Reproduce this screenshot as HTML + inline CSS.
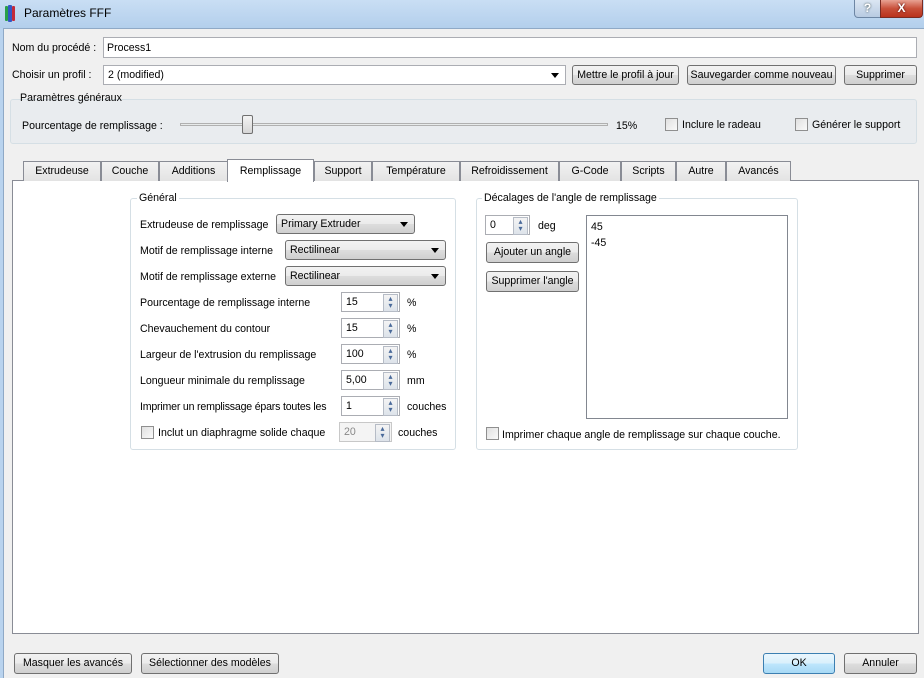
<!DOCTYPE html>
<html><head><meta charset="utf-8"><style>
*{box-sizing:border-box;margin:0;padding:0}
body{width:924px;height:678px;overflow:hidden;background:#b9d3ee;font-family:"Liberation Sans",sans-serif;font-size:10.6px;color:#000;position:relative}
.a{position:absolute;white-space:nowrap}
.title{left:0;top:0;width:924px;height:28px;background:linear-gradient(#c9def4,#b3cfec)}
.body{left:3px;top:28px;width:921px;height:650px;background:#f0f0f0;border-left:1px solid #8fa9c6;border-top:1px solid #8fa9c6}
.inp{background:#fff;border:1px solid #abadb3}
.btn{border:1px solid #707070;border-radius:3px;background:linear-gradient(#f2f2f2 0,#ebebeb 50%,#dddddd 51%,#cfcfcf 100%);text-align:center;line-height:18px}
.combo{border:1px solid #707070;border-radius:3px;background:linear-gradient(#f2f2f2 0,#ebebeb 50%,#dddddd 51%,#cfcfcf 100%);padding-left:4px;line-height:18px}
.combo:after{content:"";position:absolute;right:6px;top:7px;border-left:4px solid transparent;border-right:4px solid transparent;border-top:5px solid #000}
.group{border:1px solid #d5dfe5;border-radius:3px}
.gl{background:#f0f0f0;padding:0 2px}
.tab{top:161px;height:20px;border:1px solid #898c95;border-bottom:none;background:linear-gradient(#f2f2f2,#e3e3e3);text-align:center;line-height:19px}
.spin{background:#fff;border:1px solid #abadb3;padding-left:4px;line-height:18px}
.spin:after{content:"▴\A▾";white-space:pre;font-size:8px;line-height:7px;color:#4a6a9a;text-align:center;position:absolute;right:1px;top:1px;width:13px;height:16px;background:linear-gradient(#f4f4f4,#dde3ea);border:1px solid #b6bcc6}
.cb{width:13px;height:13px;border:1px solid #8f8f8f;background:linear-gradient(135deg,#e0e0e0,#fafafa)}
</style></head><body>
<div class="a title"></div>
<div class="a" style="left:5px;top:6px;width:3px;height:15px;background:#2aa04a;border-radius:1px"></div>
<div class="a" style="left:8px;top:5px;width:4px;height:17px;background:#3358c4;border-radius:1px"></div>
<div class="a" style="left:12px;top:6px;width:3px;height:15px;background:#c42a3a;border-radius:1px"></div>
<div class="a" style="left:24px;top:6px;font-size:12px">Paramètres FFF</div>
<div class="a" style="left:854px;top:0;width:27px;height:18px;border:1px solid #6d86a4;border-top:none;border-radius:0 0 0 4px;background:linear-gradient(#dbe6f3,#b8cbe2);text-align:center;color:#fff;font-weight:bold;font-size:12px;line-height:16px;text-shadow:0 0 2px #344">?</div>
<div class="a" style="left:880px;top:0;width:43px;height:18px;border:1px solid #7a2b22;border-top:none;border-radius:0 0 4px 0;background:linear-gradient(#e8a293,#c8503a 50%,#b9321c);text-align:center;color:#fff;font-weight:bold;font-size:12px;line-height:16px;text-shadow:0 0 2px #400">X</div>
<div class="a body"></div>

<div class="a" style="left:12px;top:42px">Nom du procédé :</div>
<div class="a inp" style="left:103px;top:37px;width:814px;height:21px;padding:4px 0 0 3px">Process1</div>
<div class="a" style="left:12px;top:69px">Choisir un profil :</div>
<div class="a combo" style="left:103px;top:65px;width:463px;height:20px;background:#fff;border-color:#abadb3;border-radius:0">2 (modified)</div>
<div class="a btn" style="left:572px;top:65px;width:107px;height:20px">Mettre le profil à jour</div>
<div class="a btn" style="left:687px;top:65px;width:149px;height:20px">Sauvegarder comme nouveau</div>
<div class="a btn" style="left:844px;top:65px;width:73px;height:20px">Supprimer</div>

<div class="a group" style="left:10px;top:99px;width:907px;height:45px;background:#e9ecef"></div>
<div class="a gl" style="left:18px;top:92px;background:transparent">Paramètres généraux</div>
<div class="a" style="left:22px;top:120px">Pourcentage de remplissage :</div>
<div class="a" style="left:180px;top:123px;width:428px;height:3px;border:1px solid #b0b0b0;background:#e7eaea"></div>
<div class="a" style="left:242px;top:115px;width:11px;height:19px;border:1px solid #707070;border-radius:2px;background:linear-gradient(#f4f4f4,#d6d6d6)"></div>
<div class="a" style="left:616px;top:120px">15%</div>
<div class="a cb" style="left:665px;top:118px"></div>
<div class="a" style="left:682px;top:119px">Inclure le radeau</div>
<div class="a cb" style="left:795px;top:118px"></div>
<div class="a" style="left:812px;top:119px">Générer le support</div>

<div class="a" style="left:12px;top:180px;width:907px;height:454px;background:#fff;border:1px solid #898c95"></div>
<div class="a tab" style="left:23px;width:78px">Extrudeuse</div>
<div class="a tab" style="left:101px;width:58px">Couche</div>
<div class="a tab" style="left:159px;width:69px">Additions</div>
<div class="a tab" style="left:227px;width:87px;top:159px;height:23px;background:#fff;z-index:2;line-height:22px">Remplissage</div>
<div class="a tab" style="left:314px;width:58px">Support</div>
<div class="a tab" style="left:372px;width:88px">Température</div>
<div class="a tab" style="left:460px;width:99px">Refroidissement</div>
<div class="a tab" style="left:559px;width:62px">G-Code</div>
<div class="a tab" style="left:621px;width:55px">Scripts</div>
<div class="a tab" style="left:676px;width:50px">Autre</div>
<div class="a tab" style="left:726px;width:65px">Avancés</div>

<div class="a group" style="left:130px;top:198px;width:326px;height:252px"></div>
<div class="a gl" style="left:137px;top:192px;background:#fff">Général</div>
<div class="a" style="left:140px;top:219px">Extrudeuse de remplissage</div>
<div class="a combo" style="left:276px;top:214px;width:139px;height:20px">Primary Extruder</div>
<div class="a" style="left:140px;top:245px">Motif de remplissage interne</div>
<div class="a combo" style="left:285px;top:240px;width:161px;height:20px">Rectilinear</div>
<div class="a" style="left:140px;top:271px">Motif de remplissage externe</div>
<div class="a combo" style="left:285px;top:266px;width:161px;height:20px">Rectilinear</div>

<div class="a" style="left:140px;top:297px">Pourcentage de remplissage interne</div>
<div class="a spin" style="left:341px;top:292px;width:59px;height:20px">15</div><div class="a" style="left:407px;top:297px">%</div>
<div class="a" style="left:140px;top:323px">Chevauchement du contour</div>
<div class="a spin" style="left:341px;top:318px;width:59px;height:20px">15</div><div class="a" style="left:407px;top:323px">%</div>
<div class="a" style="left:140px;top:349px">Largeur de l'extrusion du remplissage</div>
<div class="a spin" style="left:341px;top:344px;width:59px;height:20px">100</div><div class="a" style="left:407px;top:349px">%</div>
<div class="a" style="left:140px;top:375px">Longueur minimale du remplissage</div>
<div class="a spin" style="left:341px;top:370px;width:59px;height:20px">5,00</div><div class="a" style="left:407px;top:375px">mm</div>
<div class="a" style="left:140px;top:401px;letter-spacing:-0.2px">Imprimer un remplissage épars toutes les</div>
<div class="a spin" style="left:341px;top:396px;width:59px;height:20px">1</div><div class="a" style="left:407px;top:401px">couches</div>
<div class="a cb" style="left:141px;top:426px"></div>
<div class="a" style="left:158px;top:427px">Inclut un diaphragme solide chaque</div>
<div class="a spin" style="left:339px;top:422px;width:53px;height:20px;background:#f4f4f4;color:#888;border-color:#c8c8c8">20</div><div class="a" style="left:398px;top:427px">couches</div>

<div class="a group" style="left:476px;top:198px;width:322px;height:252px"></div>
<div class="a gl" style="left:482px;top:192px;background:#fff">Décalages de l'angle de remplissage</div>
<div class="a spin" style="left:485px;top:215px;width:45px;height:20px">0</div>
<div class="a" style="left:538px;top:220px">deg</div>
<div class="a btn" style="left:486px;top:242px;width:93px;height:21px">Ajouter un angle</div>
<div class="a btn" style="left:486px;top:271px;width:93px;height:21px">Supprimer l'angle</div>
<div class="a inp" style="left:586px;top:215px;width:202px;height:204px;border-color:#828790;padding:3px 0 0 4px;line-height:16px">45<br>-45</div>
<div class="a cb" style="left:486px;top:427px"></div>
<div class="a" style="left:502px;top:429px">Imprimer chaque angle de remplissage sur chaque couche.</div>

<div class="a btn" style="left:14px;top:653px;width:118px;height:21px">Masquer les avancés</div>
<div class="a btn" style="left:141px;top:653px;width:138px;height:21px">Sélectionner des modèles</div>
<div class="a btn" style="left:763px;top:653px;width:72px;height:21px;border-color:#3c7fb1;background:linear-gradient(#eaf6fd,#d9f0fc 50%,#bee6fd 51%,#a7d9f5)">OK</div>
<div class="a btn" style="left:844px;top:653px;width:73px;height:21px">Annuler</div>
</body></html>
